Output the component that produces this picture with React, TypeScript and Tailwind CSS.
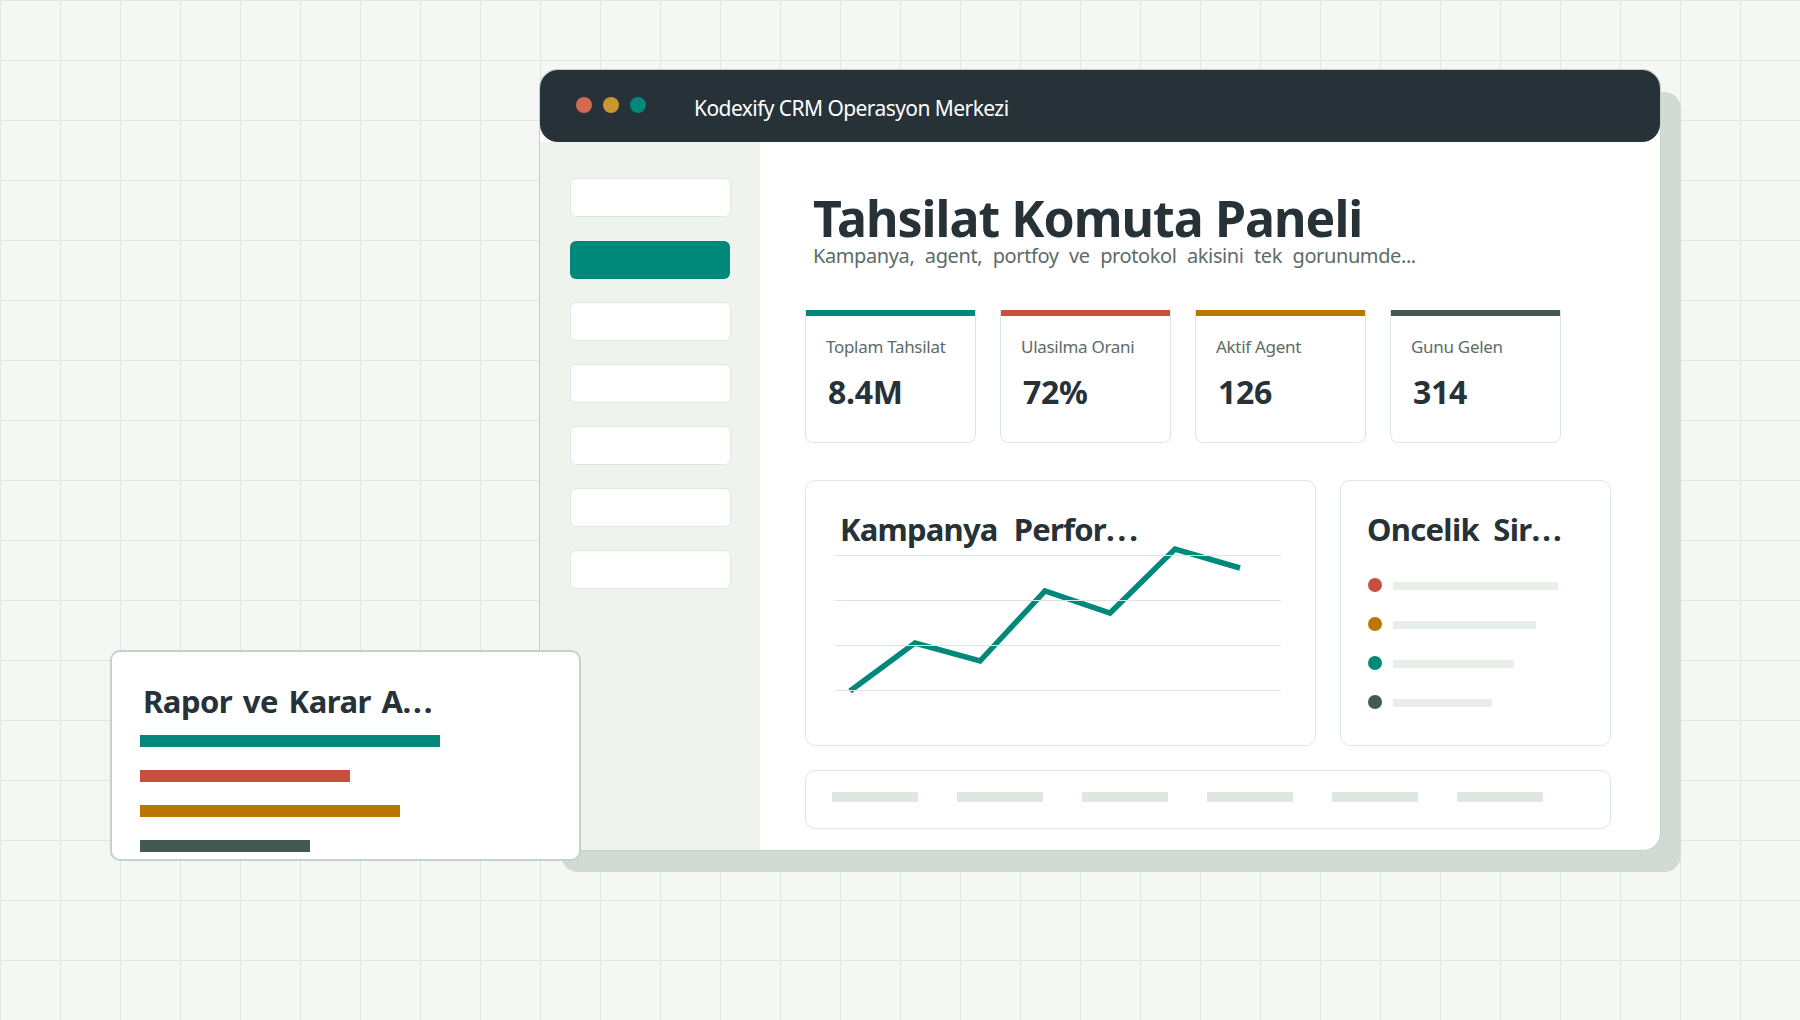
import React from "react";

const kpis = [
  { label: "Toplam Tahsilat", value: "8.4M", bar: "bg-[#00897b]" },
  { label: "Ulasilma Orani", value: "72%", bar: "bg-[#c94f3d]" },
  { label: "Aktif Agent", value: "126", bar: "bg-[#b97700]" },
  { label: "Gunu Gelen", value: "314", bar: "bg-[#44594f]" },
];

const priorities = [
  { dot: "bg-[#c94f3d]", w: "w-[165px]" },
  { dot: "bg-[#b97700]", w: "w-[143px]" },
  { dot: "bg-[#00897b]", w: "w-[121px]" },
  { dot: "bg-[#44594f]", w: "w-[99px]" },
];

const reportBars = [
  { c: "bg-[#00897b]", w: "w-[300px]" },
  { c: "bg-[#c94f3d]", w: "w-[210px]" },
  { c: "bg-[#b97700]", w: "w-[260px]" },
  { c: "bg-[#44594f]", w: "w-[170px]" },
];

export default function App() {
  return (
    <div className="relative w-[1800px] h-[1020px] overflow-hidden pl-[539px] pt-[69px] bg-[#f4f7f3] bg-[linear-gradient(to_right,#dfe8e0_1px,transparent_1px),linear-gradient(to_bottom,#dfe8e0_1px,transparent_1px)] bg-[size:60px_60px] font-['Noto_Sans','Liberation_Sans',sans-serif] text-[#263238]">
      {/* Window */}
      <div className="w-[1122px] h-[782px] flex flex-col bg-white rounded-[18px] border border-[#c4d1c7] shadow-[21px_22px_0_-1px_#d1dbd3]">
        <div className="h-[72px] shrink-0 flex items-center pl-[36px] rounded-[18px] bg-[#263238]">
          <div className="flex gap-[11px] -mt-[3px]">
            <span className="w-4 h-4 rounded-full bg-[#d4694f]" />
            <span className="w-4 h-4 rounded-full bg-[#c8972f]" />
            <span className="w-4 h-4 rounded-full bg-[#00897b]" />
          </div>
          <div className="ml-[48px] mt-[5px] text-[21px] text-white tracking-[-0.57px]">Kodexify CRM Operasyon Merkezi</div>
        </div>
        <div className="flex flex-1 min-h-0">
          {/* Sidebar */}
          <div className="w-[220px] shrink-0 bg-[#eef3ee] rounded-bl-[18px] pl-[30px] pt-[36px] flex flex-col gap-[23px]">
            {[0, 1, 2, 3, 4, 5, 6].map((i) =>
              i === 1 ? (
                <div key={i} className="w-[160px] h-[38px] mt-px rounded-[6px] bg-[#00897b]" />
              ) : (
                <div key={i} className="w-[161px] h-[39px] rounded-[6px] bg-white border border-[#dfe8e0]" />
              )
            )}
          </div>
          {/* Main */}
          <div className="flex-1 min-w-0 pl-[45px] pr-[49px] flex flex-col">
            <h1 className="mt-[50px] ml-[8px] h-[50px] leading-[52px] text-[50px] font-bold tracking-[-0.96px] whitespace-nowrap">Tahsilat Komuta Paneli</h1>
            <p className="ml-[8px] h-[28px] leading-[28px] text-[20px] text-[#5d6b68] tracking-[-0.4px] [word-spacing:5.7px] whitespace-nowrap">Kampanya, agent, portfoy ve protokol akisini tek gorunumde...</p>
            <div className="mt-[40px] flex gap-[24px]">
              {kpis.map((k) => (
                <div key={k.label} className="w-[171px] h-[133px] rounded-b-[8px] border border-[#dfe8e0] border-t-0 overflow-hidden">
                  <div className={`h-[6px] ${k.bar}`} />
                  <div className="pl-[20px] pt-[19px] text-[17px] leading-[24px] text-[#5d6b68] tracking-[-0.3px] whitespace-nowrap">{k.label}</div>
                  <div className="pl-[22px] mt-[13px] text-[32px] leading-[40px] font-bold tracking-[-0.3px]">{k.value}</div>
                </div>
              ))}
            </div>
            <div className="mt-[37px] flex gap-[24px]">
              <div className="relative w-[511px] h-[266px] rounded-[10px] border border-[#dfe8e0]">
                <div className="pl-[34px] pt-[27px] text-[31px] leading-[42px] font-bold tracking-[-0.8px] [word-spacing:9px] whitespace-nowrap">Kampanya Perfor<span className="tracking-[3px]">...</span></div>
                <svg className="absolute left-[-1px] top-[-1px]" width="511" height="266" viewBox="0 0 511 266" fill="none">
                  <polyline points="45,211 110,163 175,181 240,111 305,133 370,69 435,88" stroke="#00897b" strokeWidth="5.5" strokeLinejoin="miter" />
                  {[75, 120, 165, 210].map((y) => (
                    <line key={y} x1="30" x2="476" y1={y + 0.5} y2={y + 0.5} stroke="#dbe4dd" strokeWidth="1" />
                  ))}
                </svg>
              </div>
              <div className="w-[271px] h-[266px] rounded-[10px] border border-[#dfe8e0]">
                <div className="pl-[26px] pt-[27px] text-[31px] leading-[42px] font-bold tracking-[-0.7px] [word-spacing:7px] whitespace-nowrap">Oncelik Sir<span className="tracking-[2px]">...</span></div>
                <div className="mt-[28px] pl-[27px] flex flex-col gap-[25px]">
                  {priorities.map((p, i) => (
                    <div key={i} className="flex items-center h-[14px]">
                      <span className={`w-[14px] h-[14px] rounded-full ${p.dot}`} />
                      <span className={`ml-[11px] mt-[2px] h-[8px] bg-[#e8efe9] ${p.w}`} />
                    </div>
                  ))}
                </div>
              </div>
            </div>
            <div className="mt-[24px] h-[59px] rounded-[10px] border border-[#dfe8e0] flex items-center gap-[39px] pl-[26px]">
              {[0, 1, 2, 3, 4, 5].map((i) => (
                <span key={i} className="w-[86px] h-[10px] mb-[5px] bg-[#dfe8e0]" />
              ))}
            </div>
          </div>
        </div>
      </div>
      {/* Floating report card */}
      <div className="absolute left-[110px] top-[650px] w-[471px] h-[211px] rounded-[10px] bg-white border-2 border-[#c4d3c8] overflow-hidden">
        <div className="pl-[31px] pt-[28px] text-[31px] leading-[42px] font-bold tracking-[-0.5px] [word-spacing:3px] whitespace-nowrap">Rapor ve Karar A<span className="tracking-[2px]">...</span></div>
        <div className="mt-[13px] pl-[28px] flex flex-col gap-[23px]">
          {reportBars.map((b, i) => (
            <div key={i} className={`h-[12px] ${b.c} ${b.w}`} />
          ))}
        </div>
      </div>
    </div>
  );
}
